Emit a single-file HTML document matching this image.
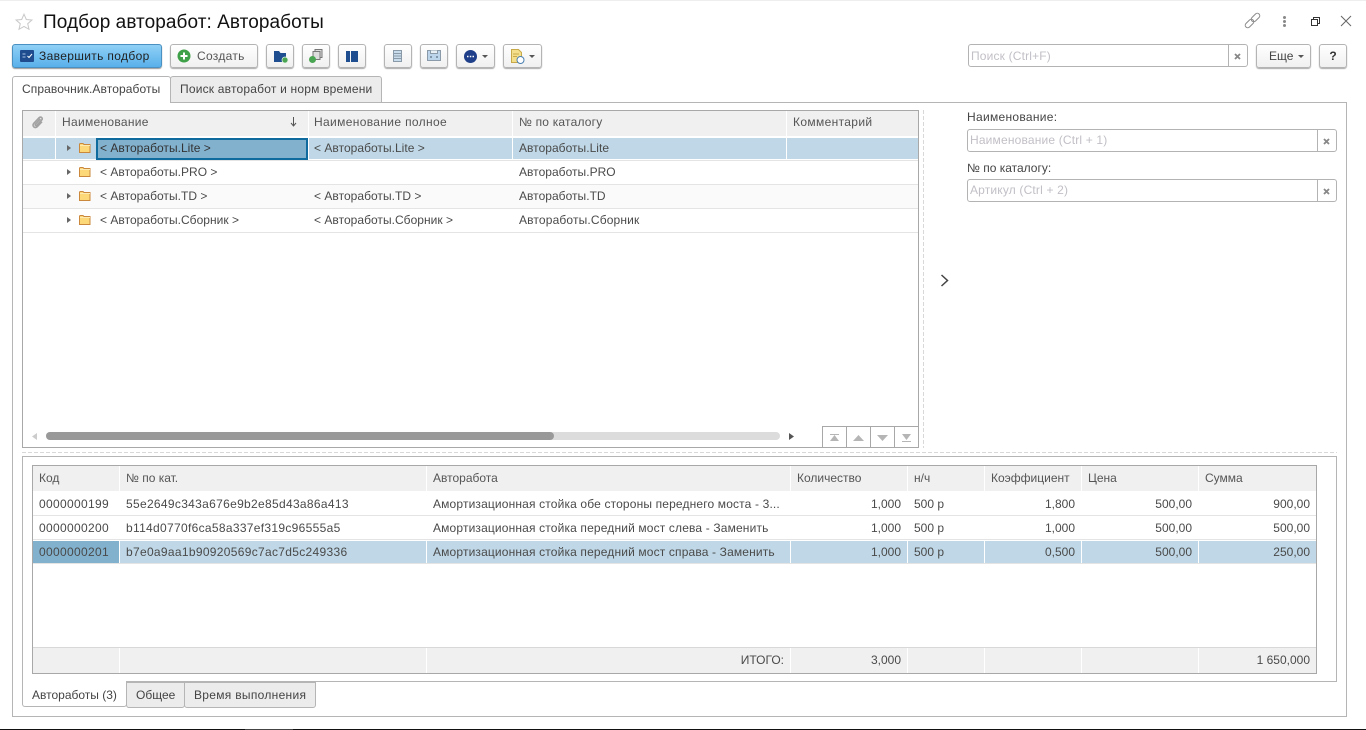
<!DOCTYPE html>
<html lang="ru"><head><meta charset="utf-8"><title>Подбор авторабот</title>
<style>
html,body{margin:0;padding:0;background:#fff}
#p{position:relative;width:1366px;height:730px;overflow:hidden;background:#fff;font:12px/14px "Liberation Sans",Arial,sans-serif;color:#4a4a4a}
#p div,#p svg{position:absolute;box-sizing:border-box}
.t{white-space:nowrap;height:24px;line-height:24px;letter-spacing:.15px}
.r{text-align:right;letter-spacing:0}
.n{letter-spacing:0}
.w{letter-spacing:.03px}
.btn{top:44px;height:24px;border:1px solid #b4b4b4;border-radius:3px;background:linear-gradient(#fff,#f0f0f0);box-shadow:0 1px 1px #aaa}
.hd{background:#f0f0f0}
.v{width:1px;background:#fff}
.ln{height:1px;background:#e4e4e4}
.inp{border:1px solid #b3b3b3;border-radius:3px;background:#fff;height:23px}
.ph{color:#c2bfc6;white-space:nowrap;line-height:21px;left:2px;top:0;letter-spacing:.17px}
.sep{top:0;bottom:0;width:1px;background:#b3b3b3}
.sel{background:#bfd7e6}
.hdt{color:#555;letter-spacing:0}
</style></head><body><div id="p">
<div style="left:0;top:0;width:1366px;height:1px;background:#eee"></div>

<svg style="left:15px;top:13px" width="18" height="18" viewBox="0 0 18 18"><path d="M9 1.2l2.3 5.3 5.6.5-4.2 3.7 1.3 5.6L9 13.4l-5 2.9 1.3-5.6L1.1 7l5.6-.5z" fill="#fff" stroke="#c8c8c8"/></svg>
<div style="left:43px;top:11px;font-size:19px;line-height:24px;color:#111;white-space:nowrap;letter-spacing:.07px">Подбор авторабот: Авторабо&#1090;ы</div>

<svg style="left:1244px;top:12px" width="17" height="17" viewBox="0 0 17 17" fill="none" stroke="#8a8a8a" stroke-width="1"><rect x=".5" y="9" width="10" height="5" rx="2.500" transform="rotate(-45 5.500 11.500)"/><rect x="6.500" y="3" width="10" height="5" rx="2.500" transform="rotate(-45 11.500 5.500)"/></svg>
<div style="left:1283px;top:16px;width:3px;height:3px;background:#888;border-radius:2px"></div>
<div style="left:1283px;top:20px;width:3px;height:3px;background:#888;border-radius:2px"></div>
<div style="left:1283px;top:24px;width:3px;height:3px;background:#888;border-radius:2px"></div>
<svg style="left:1311px;top:17px" width="9" height="9" viewBox="0 0 9 9" fill="none" stroke="#333"><path d="M2.500 2.500v-2h6v6h-2"/><rect x=".5" y="2.500" width="6" height="6"/></svg>
<svg style="left:1340px;top:15px" width="12" height="12" viewBox="0 0 12 12" fill="none" stroke="#666"><path d="M1 1l10 10M11 1L1 11"/></svg>

<div style="left:12px;top:44px;width:150px;height:24px;border:1px solid #4a90c0;border-radius:3px;background:linear-gradient(#8fd0f6,#58b0ea);box-shadow:0 1px 1px #999"></div>
<svg style="left:20px;top:50px" width="14" height="12" viewBox="0 0 14 12"><rect width="14" height="12" rx="1" fill="#1e4c8e"/><path d="M2.500 4h3M2.500 7h3" stroke="#a9c4e6"/><path d="M7.500 6l1.500 1.500L12 4" stroke="#fff" fill="none"/></svg>
<div class="t" style="left:39px;top:44px;color:#222;letter-spacing:.35px">Завершить подбор</div>

<div class="btn" style="left:170px;width:88px"></div>
<svg style="left:177px;top:49px" width="14" height="14" viewBox="0 0 14 14"><circle cx="7" cy="7" r="6.500" fill="#3fa04a"/><path d="M7 3.500v7M3.500 7h7" stroke="#fff" stroke-width="2"/></svg>
<div class="t" style="left:197px;top:44px;color:#555;letter-spacing:.3px">Создать</div>

<div class="btn" style="left:266px;width:28px"></div>
<svg style="left:273px;top:49px" width="16" height="15" viewBox="0 0 16 15"><path d="M1 2h5l1.500 2H13v9H1z" fill="#1f4e90"/><circle cx="12" cy="11" r="3" fill="#4aa552" stroke="#dff0df" stroke-width=".8"/></svg>

<div class="btn" style="left:302px;width:28px"></div>
<svg style="left:308px;top:48px" width="16" height="16" viewBox="0 0 16 16"><rect x="7" y="1.500" width="7" height="8" fill="#ddd" stroke="#777"/><rect x="5" y="3.500" width="7" height="8" fill="#ddd" stroke="#777"/><circle cx="4.500" cy="11.500" r="3.500" fill="#4aa552"/></svg>

<div class="btn" style="left:338px;width:28px"></div>
<div style="left:346px;top:51px;width:4px;height:11px;background:#1f4e90"></div>
<div style="left:351px;top:51px;width:7px;height:11px;background:#1f4e90"></div>

<div class="btn" style="left:384px;width:28px"></div>
<svg style="left:393px;top:50px" width="10" height="13" viewBox="0 0 10 13"><rect x=".5" y=".5" width="8" height="11" fill="#c9dcec" stroke="#8a9aa8"/><path d="M1 3.500h7M1 6h7M1 8.500h7" stroke="#8a9aa8"/></svg>

<div class="btn" style="left:420px;width:28px"></div>
<svg style="left:427px;top:50px" width="15" height="12" viewBox="0 0 15 12"><rect x=".5" y=".5" width="13" height="10" fill="#bcd5ea" stroke="#8a9aa8"/><path d="M3.500.5v3h7v-3" fill="#e8f0f6" stroke="#8a9aa8"/><circle cx="4" cy="7" r="1" fill="#6d8296"/><circle cx="10" cy="7" r="1" fill="#6d8296"/></svg>

<div class="btn" style="left:456px;width:39px"></div>
<svg style="left:464px;top:50px" width="13" height="13" viewBox="0 0 13 13"><circle cx="6.500" cy="6.500" r="6.500" fill="#1f3f8a"/><path d="M3 6.500h1.500M5.800 6.500h1.500M8.500 6.500H10" stroke="#fff" stroke-width="1.500"/></svg>
<svg style="left:482px;top:55px" width="6" height="3" viewBox="0 0 6 3"><path d="M0 0h6L3 3z" fill="#555"/></svg>

<div class="btn" style="left:503px;width:39px"></div>
<svg style="left:510px;top:48px" width="16" height="17" viewBox="0 0 16 17"><path d="M1.500 1.500h7l3 3v10h-10z" fill="#f4e08c" stroke="#c8a94a"/><path d="M3 6h6M3 8.500h4" stroke="#c8a94a"/><circle cx="10.500" cy="12" r="3.500" fill="#fff" stroke="#4a7fb0"/></svg>
<svg style="left:529px;top:55px" width="6" height="3" viewBox="0 0 6 3"><path d="M0 0h6L3 3z" fill="#555"/></svg>

<div class="inp" style="left:968px;top:44px;width:280px"><div class="ph" style="top:1px">Поиск (Ctrl+F)</div><div class="sep" style="left:259px"></div>
<svg style="left:265px;top:8px" width="7" height="7" viewBox="0 0 7 7"><path d="M1 1l5 5M6 1L1 6" stroke="#888" stroke-width="1.800"/></svg></div>
<div class="btn" style="left:1256px;width:55px"></div>
<div class="t n" style="left:1269px;top:44px;color:#444">Еще</div>
<svg style="left:1298px;top:55px" width="6" height="3" viewBox="0 0 6 3"><path d="M0 0h6L3 3z" fill="#555"/></svg>
<div class="btn" style="left:1319px;width:28px"></div>
<div class="t n" style="left:1319px;top:44px;width:28px;text-align:center;font-weight:bold;color:#333">?</div>

<div style="left:12px;top:102px;width:1335px;height:615px;border:1px solid #b5b5b5"></div>
<div style="left:12px;top:76px;width:159px;height:27px;background:#fff;border:1px solid #b5b5b5;border-bottom:0;border-radius:3px 3px 0 0"></div>
<div class="t" style="left:22px;top:77px;color:#444;letter-spacing:.1px">Справочник.Авторабо&#1090;ы</div>
<div style="left:170px;top:76px;width:212px;height:27px;background:#ececec;border:1px solid #b5b5b5;border-radius:3px 3px 0 0"></div>
<div class="t" style="left:180px;top:77px;color:#444;letter-spacing:.2px">Поиск авторабот и норм времени</div>

<!-- tree table -->
<div style="left:22px;top:110px;width:897px;height:338px;border:1px solid #a8a8a8;background:#fff"></div>
<div class="hd" style="left:23px;top:111px;width:895px;height:25px"></div>
<div class="v" style="left:55px;top:111px;height:25px"></div>
<div class="v" style="left:308px;top:111px;height:25px"></div>
<div class="v" style="left:512px;top:111px;height:25px"></div>
<div class="v" style="left:786px;top:111px;height:25px"></div>
<svg style="left:31px;top:116px" width="13" height="13" viewBox="0 0 15 16" fill="none" stroke="#a2a2a2" stroke-width="2"><path d="M11 3.500L5 10c-1 1.200 .6 2.600 1.600 1.500l6-6.500c2-2.300-1-5-3-3L3 9c-3 3.200 1.500 7 4.200 4.200L13 7"/></svg>
<div class="t hdt" style="left:62px;top:110px;letter-spacing:.3px">Наименование</div>
<svg style="left:290px;top:117px" width="7" height="10" viewBox="0 0 7 10"><path d="M3.500 0v8M1 6l2.500 3L6 6" fill="none" stroke="#555"/></svg>
<div class="t hdt" style="left:314px;top:110px;letter-spacing:.35px">Наименование полное</div>
<div class="t hdt" style="left:519px;top:110px;letter-spacing:.2px">№ по каталогу</div>
<div class="t hdt" style="left:793px;top:110px;letter-spacing:.35px">Комментарий</div>

<div class="sel" style="left:23px;top:138px;width:895px;height:21px"></div>
<div class="v" style="left:55px;top:138px;height:21px"></div>
<div class="v" style="left:308px;top:138px;height:21px"></div>
<div class="v" style="left:512px;top:138px;height:21px"></div>
<div class="v" style="left:786px;top:138px;height:21px"></div>
<div style="left:96px;top:138px;width:212px;height:22px;background:#82b1ce;border:2px solid #0f6a9e"></div>
<div class="ln" style="left:23px;top:160px;width:895px"></div>
<div style="left:23px;top:185px;width:895px;height:23px;background:#fafafa"></div>
<div class="ln" style="left:23px;top:184px;width:895px"></div>
<div class="ln" style="left:23px;top:208px;width:895px"></div>
<div class="ln" style="left:23px;top:232px;width:895px"></div>

<svg style="left:67px;top:145px" width="4" height="6" viewBox="0 0 4 6"><path d="M0 0l4 3-4 3z" fill="#666"/></svg>
<svg style="left:67px;top:169px" width="4" height="6" viewBox="0 0 4 6"><path d="M0 0l4 3-4 3z" fill="#666"/></svg>
<svg style="left:67px;top:193px" width="4" height="6" viewBox="0 0 4 6"><path d="M0 0l4 3-4 3z" fill="#666"/></svg>
<svg style="left:67px;top:217px" width="4" height="6" viewBox="0 0 4 6"><path d="M0 0l4 3-4 3z" fill="#666"/></svg>
<svg style="left:79px;top:143px" width="12" height="10" viewBox="0 0 12 10"><path d="M.5 1.500Q.5.500 1.500.500h2.500l1 1h6v8h-10.500z" fill="#fcd878" stroke="#c9883c"/><path d="M1 2.500h10" stroke="#fdeab0"/></svg>
<svg style="left:79px;top:167px" width="12" height="10" viewBox="0 0 12 10"><path d="M.5 1.500Q.5.500 1.500.500h2.500l1 1h6v8h-10.500z" fill="#fcd878" stroke="#c9883c"/><path d="M1 2.500h10" stroke="#fdeab0"/></svg>
<svg style="left:79px;top:191px" width="12" height="10" viewBox="0 0 12 10"><path d="M.5 1.500Q.5.500 1.500.500h2.500l1 1h6v8h-10.500z" fill="#fcd878" stroke="#c9883c"/><path d="M1 2.500h10" stroke="#fdeab0"/></svg>
<svg style="left:79px;top:215px" width="12" height="10" viewBox="0 0 12 10"><path d="M.5 1.500Q.5.500 1.500.500h2.500l1 1h6v8h-10.500z" fill="#fcd878" stroke="#c9883c"/><path d="M1 2.500h10" stroke="#fdeab0"/></svg>

<div class="t w" style="left:100px;top:136px;color:#333">&lt; Авторабо&#1090;ы.Lite &gt;</div>
<div class="t w" style="left:314px;top:136px">&lt; Авторабо&#1090;ы.Lite &gt;</div>
<div class="t w" style="left:519px;top:136px">Авторабо&#1090;ы.Lite</div>
<div class="t w" style="left:100px;top:160px">&lt; Авторабо&#1090;ы.PRO &gt;</div>
<div class="t w" style="left:519px;top:160px">Авторабо&#1090;ы.PRO</div>
<div class="t w" style="left:100px;top:184px">&lt; Авторабо&#1090;ы.TD &gt;</div>
<div class="t w" style="left:314px;top:184px">&lt; Авторабо&#1090;ы.TD &gt;</div>
<div class="t w" style="left:519px;top:184px">Авторабо&#1090;ы.TD</div>
<div class="t w" style="left:100px;top:208px">&lt; Авторабо&#1090;ы.Сборник &gt;</div>
<div class="t w" style="left:314px;top:208px">&lt; Авторабо&#1090;ы.Сборник &gt;</div>
<div class="t" style="left:519px;top:208px">Авторабо&#1090;ы.Сборник</div>

<svg style="left:32px;top:433px" width="5" height="7" viewBox="0 0 5 7"><path d="M5 0L0 3.500 5 7z" fill="#ccc"/></svg>
<div style="left:46px;top:432px;width:734px;height:8px;border-radius:4px;background:#dcdcdc"></div>
<div style="left:46px;top:432px;width:508px;height:8px;border-radius:4px;background:#999"></div>
<svg style="left:789px;top:433px" width="5" height="7" viewBox="0 0 5 7"><path d="M0 0l5 3.500L0 7z" fill="#555"/></svg>

<div style="left:822px;top:426px;width:97px;height:22px;border:1px solid #a8a8a8;background:#fff"></div>
<div style="left:846px;top:426px;width:1px;height:22px;background:#a8a8a8"></div>
<div style="left:870px;top:426px;width:1px;height:22px;background:#a8a8a8"></div>
<div style="left:894px;top:426px;width:1px;height:22px;background:#a8a8a8"></div>
<svg style="left:829px;top:434px" width="11" height="8" viewBox="0 0 11 8"><path d="M1 0h9v1H1zM5.500 1L10 7H1z" fill="#b5b5b5"/></svg>
<svg style="left:853px;top:435px" width="11" height="6" viewBox="0 0 11 6"><path d="M5.500 0L11 6H0z" fill="#b5b5b5"/></svg>
<svg style="left:877px;top:435px" width="11" height="6" viewBox="0 0 11 6"><path d="M0 0h11L5.500 6z" fill="#b5b5b5"/></svg>
<svg style="left:901px;top:434px" width="11" height="8" viewBox="0 0 11 8"><path d="M1 0h9L5.500 6zM1 7h9v1H1z" fill="#b5b5b5"/></svg>

<div style="left:923px;top:110px;height:338px;width:1px;background:repeating-linear-gradient(180deg,#d8d8d8 0 4px,transparent 4px 6px)"></div>
<div style="left:22px;top:452px;width:1315px;height:1px;background:repeating-linear-gradient(90deg,#d8d8d8 0 4px,transparent 4px 6px)"></div>
<svg style="left:940px;top:274px" width="9" height="13" viewBox="0 0 9 13"><path d="M1.500 1l6 5.500-6 5.500" fill="none" stroke="#444" stroke-width="1.500"/></svg>

<div class="t" style="left:967px;top:105px;color:#444;letter-spacing:.3px">Наименование:</div>
<div class="inp" style="left:967px;top:129px;width:370px"><div class="ph">Наименование (Ctrl + 1)</div><div class="sep" style="left:349px"></div>
<svg style="left:355px;top:8px" width="7" height="7" viewBox="0 0 7 7"><path d="M1 1l5 5M6 1L1 6" stroke="#888" stroke-width="1.800"/></svg></div>
<div class="t n" style="left:967px;top:156px;color:#444">№ по каталогу:</div>
<div class="inp" style="left:967px;top:179px;width:370px"><div class="ph">Артикул (Ctrl + 2)</div><div class="sep" style="left:349px"></div>
<svg style="left:355px;top:8px" width="7" height="7" viewBox="0 0 7 7"><path d="M1 1l5 5M6 1L1 6" stroke="#888" stroke-width="1.800"/></svg></div>

<!-- lower -->
<div style="left:22px;top:456px;width:1315px;height:226px;border:1px solid #b5b5b5"></div>
<div style="left:32px;top:465px;width:1285px;height:209px;border:1px solid #a8a8a8;background:#fff"></div>
<div class="hd" style="left:33px;top:466px;width:1283px;height:25px"></div>
<div class="hd" style="left:33px;top:648px;width:1283px;height:25px"></div>
<div class="ln" style="left:33px;top:647px;width:1283px;background:#d8d8d8"></div>
<div class="ln" style="left:33px;top:515px;width:1283px"></div>
<div class="ln" style="left:33px;top:539px;width:1283px"></div>
<div class="ln" style="left:33px;top:563px;width:1283px"></div>
<div class="sel" style="left:33px;top:541px;width:1283px;height:22px"></div>
<div style="left:33px;top:541px;width:86px;height:22px;background:#82b1ce"></div>

<div class="v" style="left:119px;top:466px;height:25px"></div><div class="v" style="left:426px;top:466px;height:25px"></div><div class="v" style="left:790px;top:466px;height:25px"></div><div class="v" style="left:907px;top:466px;height:25px"></div><div class="v" style="left:984px;top:466px;height:25px"></div><div class="v" style="left:1081px;top:466px;height:25px"></div><div class="v" style="left:1198px;top:466px;height:25px"></div>
<div class="v" style="left:119px;top:648px;height:25px"></div><div class="v" style="left:426px;top:648px;height:25px"></div><div class="v" style="left:790px;top:648px;height:25px"></div><div class="v" style="left:907px;top:648px;height:25px"></div><div class="v" style="left:984px;top:648px;height:25px"></div><div class="v" style="left:1081px;top:648px;height:25px"></div><div class="v" style="left:1198px;top:648px;height:25px"></div>
<div class="v" style="left:119px;top:541px;height:22px"></div><div class="v" style="left:426px;top:541px;height:22px"></div><div class="v" style="left:790px;top:541px;height:22px"></div><div class="v" style="left:907px;top:541px;height:22px"></div><div class="v" style="left:984px;top:541px;height:22px"></div><div class="v" style="left:1081px;top:541px;height:22px"></div><div class="v" style="left:1198px;top:541px;height:22px"></div>

<div class="t hdt" style="left:39px;top:466px">Код</div>
<div class="t hdt" style="left:126px;top:466px">№ по кат.</div>
<div class="t hdt" style="left:433px;top:466px">Авторабо&#1090;а</div>
<div class="t hdt" style="left:797px;top:466px">Количество</div>
<div class="t hdt" style="left:914px;top:466px">н/ч</div>
<div class="t hdt" style="left:991px;top:466px">Коэффициент</div>
<div class="t hdt" style="left:1088px;top:466px">Цена</div>
<div class="t hdt" style="left:1205px;top:466px">Сумма</div>

<div class="t" style="left:39px;top:492px;letter-spacing:.33px">0000000199</div>
<div class="t" style="left:126px;top:492px;letter-spacing:.31px">55e2649c343a676e9b2e85d43a86a413</div>
<div class="t" style="left:433px;top:492px">Амортизационная стойка обе стороны переднего моста - 3...</div>
<div class="t r" style="left:790px;width:111px;top:492px">1,000</div>
<div class="t n" style="left:914px;top:492px">500 р</div>
<div class="t r" style="left:984px;width:91px;top:492px">1,800</div>
<div class="t r" style="left:1081px;width:111px;top:492px">500,00</div>
<div class="t r" style="left:1198px;width:112px;top:492px">900,00</div>

<div class="t" style="left:39px;top:516px;letter-spacing:.33px">0000000200</div>
<div class="t" style="left:126px;top:516px;letter-spacing:.31px">b114d0770f6ca58a337ef319c96555a5</div>
<div class="t" style="left:433px;top:516px">Амортизационная стойка передний мост слева - Заменить</div>
<div class="t r" style="left:790px;width:111px;top:516px">1,000</div>
<div class="t n" style="left:914px;top:516px">500 р</div>
<div class="t r" style="left:984px;width:91px;top:516px">1,000</div>
<div class="t r" style="left:1081px;width:111px;top:516px">500,00</div>
<div class="t r" style="left:1198px;width:112px;top:516px">500,00</div>

<div class="t" style="left:39px;top:540px;letter-spacing:.33px">0000000201</div>
<div class="t" style="left:126px;top:540px;letter-spacing:.31px">b7e0a9aa1b90920569c7ac7d5c249336</div>
<div class="t" style="left:433px;top:540px">Амортизационная стойка передний мост справа - Заменить</div>
<div class="t r" style="left:790px;width:111px;top:540px">1,000</div>
<div class="t n" style="left:914px;top:540px">500 р</div>
<div class="t r" style="left:984px;width:91px;top:540px">0,500</div>
<div class="t r" style="left:1081px;width:111px;top:540px">500,00</div>
<div class="t r" style="left:1198px;width:112px;top:540px">250,00</div>

<div class="t r" style="left:426px;width:358px;top:648px">ИТОГО:</div>
<div class="t r" style="left:790px;width:111px;top:648px">3,000</div>
<div class="t r" style="left:1198px;width:112px;top:648px">1 650,000</div>

<div style="left:22px;top:681px;width:105px;height:26px;background:#fff;border:1px solid #b5b5b5;border-top:0;border-radius:0 0 3px 3px"></div>
<div class="t n" style="left:32px;top:683px;color:#444">Авторабо&#1090;ы (3)</div>
<div style="left:126px;top:682px;width:59px;height:26px;background:#ececec;border:1px solid #b5b5b5;border-radius:0 0 3px 3px"></div>
<div class="t n" style="left:136px;top:683px;color:#444">Общее</div>
<div style="left:184px;top:682px;width:132px;height:26px;background:#ececec;border:1px solid #b5b5b5;border-radius:0 0 3px 3px"></div>
<div class="t" style="left:194px;top:683px;color:#444;letter-spacing:.3px">Время выполнения</div>

<div style="left:0;top:729px;width:1366px;height:1px;background:#111"></div>
<div style="left:245px;top:729px;width:48px;height:1px;background:#444"></div>
</div></body></html>
